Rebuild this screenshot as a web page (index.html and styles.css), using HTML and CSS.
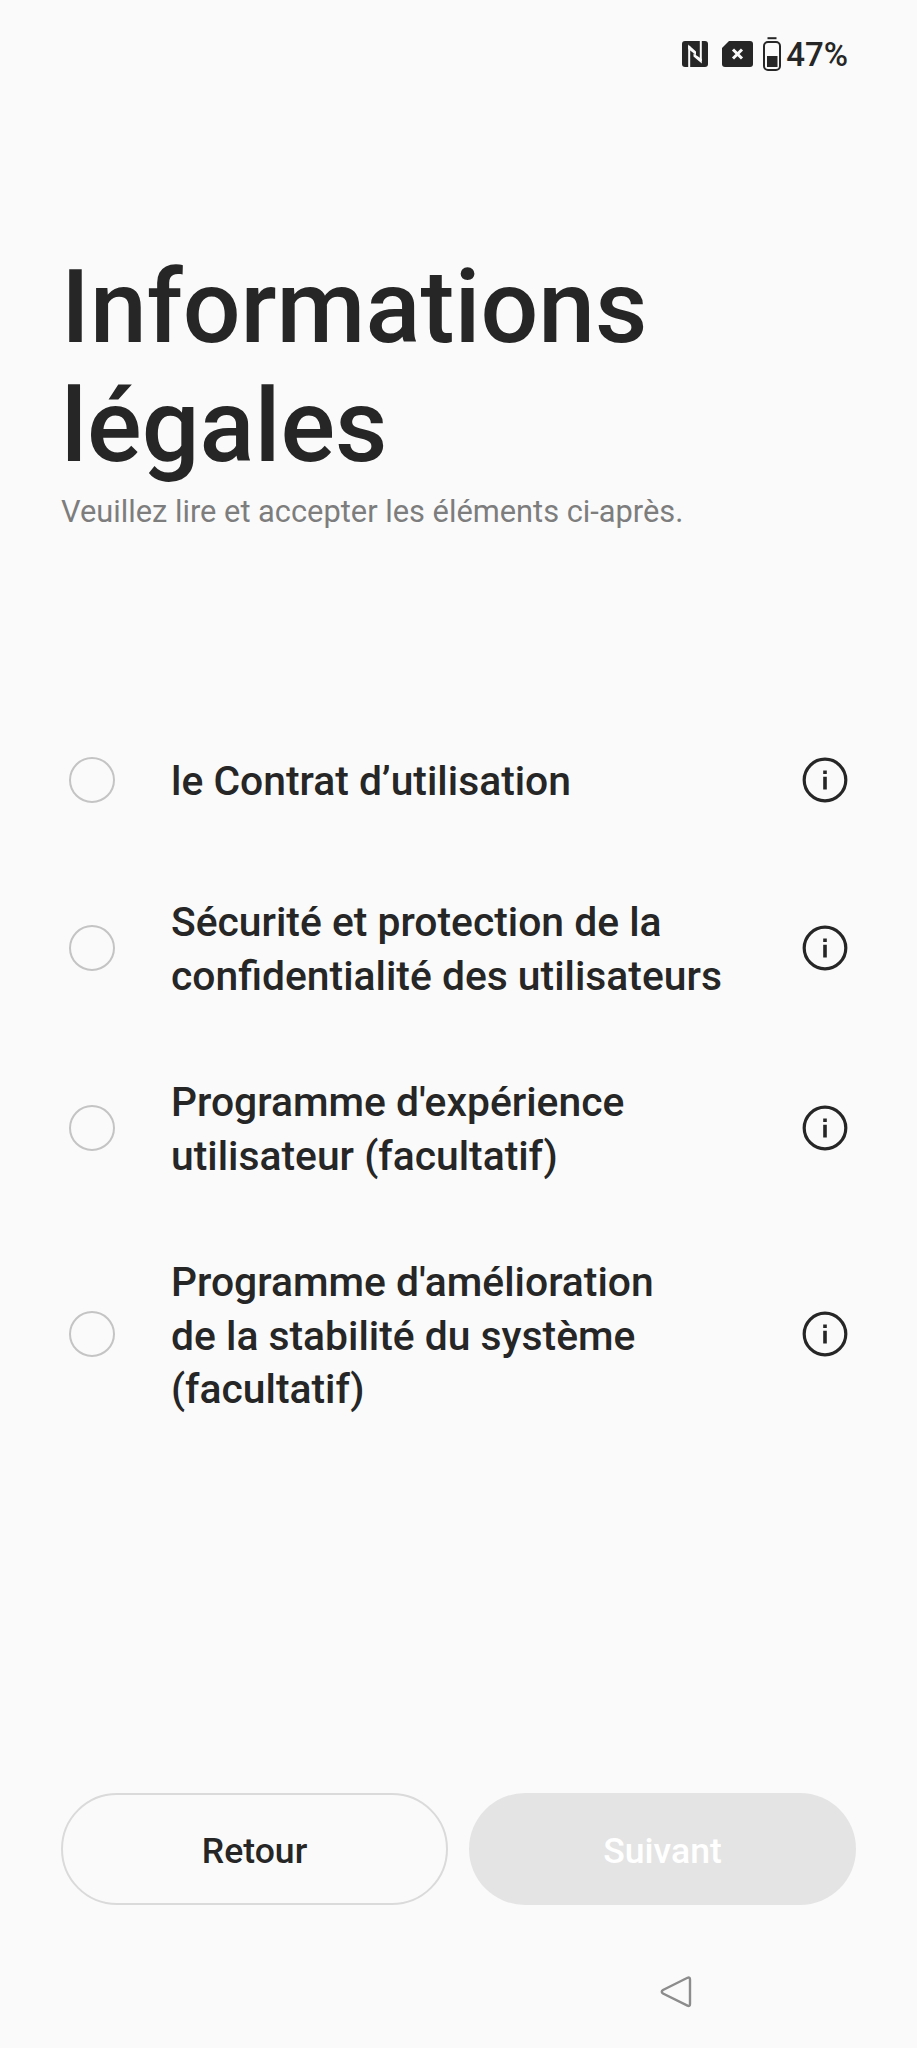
FILE: index.html
```html
<!DOCTYPE html>
<html lang="fr">

<head>
    <meta charset="UTF-8">
    <meta name="viewport" content="width=device-width, initial-scale=1.0">
    <title>Informations légales</title>
    <link rel="stylesheet" href="styles.css">
</head>

<body>
    <div class="status-bar">
        <svg class="icon-nfc" width="26" height="26" viewBox="0 0 26 26">
            <rect width="26" height="26" rx="3" fill="#262626" />
            <path d="M7.2 26V5M18.8 0V20" stroke="#fafafa" stroke-width="2" />
            <path d="M6.2 3.5L14 10.5V14L6.2 8ZM19.8 22.5L11.5 15.5V12.5L19.8 18Z" fill="#fafafa" />
        </svg>
        <svg class="icon-sim" width="31" height="26" viewBox="0 0 31 26">
            <path d="M7 0H28Q31 0 31 3V23Q31 26 28 26H3Q0 26 0 23V7Z" fill="#262626" />
            <path d="M11 8.5L20 17.5M20 8.5L11 17.5" stroke="#fafafa" stroke-width="3" />
        </svg>
        <svg class="icon-battery" width="18" height="34" viewBox="0 0 18 34">
            <path d="M4.5 1.2H13.5" stroke="#262626" stroke-width="2" />
            <rect x="1" y="5" width="16" height="28" rx="4" fill="none" stroke="#262626" stroke-width="2" />
            <rect x="4" y="19" width="10.5" height="11" fill="#262626" />
        </svg>
        <span class="battery-text">47%</span>
    </div>

    <div class="header">
        <h1 class="title">Informations<br>légales</h1>
        <p class="subtitle">Veuillez lire et accepter les éléments ci-après.</p>
    </div>

    <div class="list">
        <div class="item">
            <span class="radio"></span>
            <span class="label">le Contrat d’utilisation</span>
            <svg class="info" width="46" height="46" viewBox="0 0 46 46">
                <circle cx="23" cy="23" r="20.8" />
                <path d="M21.2 13.5H24.8V17H21.2ZM21.2 19.8H24.8V32.5H21.2Z" />
            </svg>
        </div>
        <div class="item">
            <span class="radio"></span>
            <span class="label">Sécurité et protection de la<br>confidentialité des utilisateurs</span>
            <svg class="info" width="46" height="46" viewBox="0 0 46 46">
                <circle cx="23" cy="23" r="20.8" />
                <path d="M21.2 13.5H24.8V17H21.2ZM21.2 19.8H24.8V32.5H21.2Z" />
            </svg>
        </div>
        <div class="item">
            <span class="radio"></span>
            <span class="label">Programme d'expérience<br>utilisateur (facultatif)</span>
            <svg class="info" width="46" height="46" viewBox="0 0 46 46">
                <circle cx="23" cy="23" r="20.8" />
                <path d="M21.2 13.5H24.8V17H21.2ZM21.2 19.8H24.8V32.5H21.2Z" />
            </svg>
        </div>
        <div class="item">
            <span class="radio"></span>
            <span class="label">Programme d'amélioration<br>de la stabilité du système<br>(facultatif)</span>
            <svg class="info" width="46" height="46" viewBox="0 0 46 46">
                <circle cx="23" cy="23" r="20.8" />
                <path d="M21.2 13.5H24.8V17H21.2ZM21.2 19.8H24.8V32.5H21.2Z" />
            </svg>
        </div>
    </div>

    <div class="buttons">
        <button class="btn btn-back">Retour</button>
        <button class="btn btn-next" disabled>Suivant</button>
    </div>

    <div class="nav-bar">
        <svg width="32" height="32" viewBox="0 0 32 32">
            <path d="M27.5 1.8Q30 0.8 30 3.5V28Q30 30.8 27.5 29.6L3 17.5Q0.5 15.7 3 14Z" fill="none" stroke="#8c8c8c" stroke-width="2.4" />
        </svg>
    </div>
</body>

</html>
```

FILE: styles.css
```css
* {
    box-sizing: border-box;
}

body {
    margin: 0;
    height: 2048px;
    display: flex;
    flex-direction: column;
    background-color: #fafafa;
    color: #262626;
    font-family: Roboto, sans-serif;
    overflow: hidden;
}

.status-bar {
    display: flex;
    justify-content: flex-end;
    align-items: center;
    height: 108px;
    padding-right: 69px;
}

.icon-nfc {
    margin-right: 14px;
}

.icon-sim {
    margin-right: 10px;
}

.icon-battery {
    margin-right: 5px;
}

.battery-text {
    padding-top: 2px;
    font-size: 33px;
    font-weight: 500;
    line-height: 40px;
}

.header {
    height: 592px;
    padding: 140px 0 0 61px;
}

.title {
    margin: 0;
    font-size: 102px;
    font-weight: 500;
    line-height: 119px;
}

.subtitle {
    margin: 6px 0 0;
    font-size: 30.8px;
    line-height: 40px;
    color: #7d7d7d;
}

.list {
    display: flex;
    flex-direction: column;
    gap: 67px;
    height: 1093px;
    padding: 36px 69px 0;
}

.item {
    display: flex;
    align-items: center;
    min-height: 88px;
}

.radio {
    width: 46px;
    height: 46px;
    border: 2px solid #c4c4c4;
    border-radius: 50%;
}

.label {
    flex: 1;
    padding: 5px 0 1px 56px;
    font-size: 40.8px;
    font-weight: 500;
    line-height: 53.5px;
}

.info circle {
    fill: none;
    stroke: #262626;
    stroke-width: 3.2;
}

.info path {
    fill: #262626;
}

.buttons {
    display: flex;
    gap: 21px;
    padding: 0 61px;
}

.btn {
    width: 387px;
    height: 112px;
    padding: 4px 0 0;
    border: none;
    border-radius: 56px;
    font-family: inherit;
    font-size: 35.6px;
    font-weight: 500;
}

.btn-back {
    background-color: #fafafa;
    border: 2px solid #dadada;
    color: #262626;
}

.btn-next {
    background-color: #e4e4e4;
    color: #fff;
}

.nav-bar {
    display: flex;
    justify-content: flex-end;
    padding: 71px 225px 0 0;
}
```
